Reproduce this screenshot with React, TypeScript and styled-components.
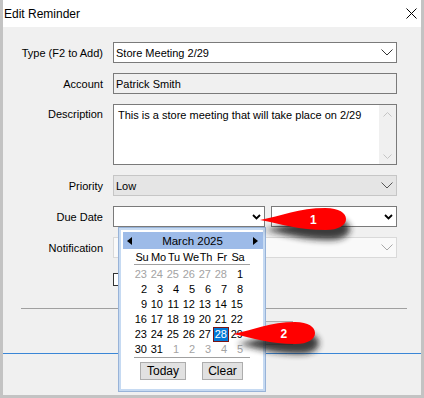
import React from 'react';
import styled, { createGlobalStyle } from 'styled-components';

const GlobalStyle = createGlobalStyle`
  html, body { margin: 0; padding: 0; }
  body {
    font-family: "Liberation Sans", Arial, sans-serif;
    font-size: 11px;
    color: #000;
  }
`;

const Frame = styled.div`
  position: relative;
  width: 424px;
  height: 398px;
  box-sizing: border-box;
  background: #c3c3c3;
  padding: 0 3px 3px 3px;
  display: flex;
  flex-direction: column;
`;

const Window = styled.div`
  flex: 1;
  display: flex;
  flex-direction: column;
  background: #f0f0f0;
`;

const TitleBar = styled.div`
  height: 27px;
  background: #fff;
  display: flex;
  align-items: center;
  justify-content: space-between;
  padding: 0 4px 0 1px;
  font-size: 12px;
`;

const Form = styled.div`
  display: grid;
  grid-template-columns: 100px 284px;
  column-gap: 10px;
  row-gap: 10px;
  padding-top: 15px;
`;

const Label = styled.div<{ $top?: boolean }>`
  text-align: right;
  align-self: ${p => (p.$top ? 'start' : 'center')};
  padding-top: ${p => (p.$top ? '4px' : '0')};
  white-space: nowrap;
`;

type Variant = 'edit' | 'readonly' | 'disabled' | 'faint';

const borders: Record<Variant, string> = {
  edit: '#7a7a7a',
  readonly: '#7a7a7a',
  disabled: '#c6c6c6',
  faint: '#d9d9d9',
};

const fills: Record<Variant, string> = {
  edit: '#ffffff',
  readonly: '#f0f0f0',
  disabled: '#e5e5e5',
  faint: '#f9f9f9',
};

const Box = styled.div<{ $variant: Variant; $width?: number }>`
  position: relative;
  height: 21px;
  width: ${p => (p.$width ? `${p.$width}px` : 'auto')};
  box-sizing: border-box;
  border: 1px solid ${p => borders[p.$variant]};
  background: ${p => fills[p.$variant]};
  display: flex;
  align-items: center;
  justify-content: space-between;
  padding: 0 3px 0 2px;
`;

const DueRow = styled.div`
  display: flex;
  gap: 6px;
`;

const TextArea = styled.div`
  height: 61px;
  box-sizing: border-box;
  border: 1px solid #7a7a7a;
  background: #fff;
  display: flex;
`;

const AreaText = styled.div`
  flex: 1;
  padding: 4px 0 0 4px;
`;

const ScrollBar = styled.div`
  width: 17px;
  background: #f0f0f0;
  display: flex;
  flex-direction: column;
  justify-content: space-between;
  align-items: center;
  padding: 7px 0 5px;
`;

const Check = styled.div`
  width: 13px;
  height: 13px;
  box-sizing: border-box;
  border: 1px solid #333;
  background: #fff;
  margin-top: 5px;
`;

const Separator = styled.div`
  height: 1px;
  background: #a0a0a0;
  margin: 22px 14px 0 18px;
`;

const ButtonRow = styled.div`
  display: flex;
  padding-left: 215px;
  margin-top: 12px;
`;

const DialogButton = styled.div`
  width: 75px;
  height: 24px;
  box-sizing: border-box;
  border: 1px solid #adadad;
  background: #e1e1e1;
`;

const Footer = styled.div`
  flex: 1;
  border-top: 1px solid #3a86d6;
  margin-top: 8px;
`;

/* calendar dropdown */

const Popup = styled.div`
  position: absolute;
  left: 4px;
  top: 20px;
  z-index: 5;
  width: 148px;
  height: 165px;
  box-sizing: border-box;
  border: 1px solid #98b3d8;
  background: #c6daf2;
  padding: 2px;
`;

const PopupInner = styled.div`
  height: 100%;
  box-sizing: border-box;
  background: #fff;
  padding: 2px 0 0 2px;
  display: flex;
  flex-direction: column;
`;

const CalHeader = styled.div`
  height: 17px;
  background: #9dbbe8;
  display: flex;
  align-items: center;
  justify-content: space-between;
  padding: 0 5px 0 4px;
  font-size: 11.5px;
`;

const Arrow = styled.div<{ $dir: 'left' | 'right' }>`
  width: 0;
  height: 0;
  border-top: 4px solid transparent;
  border-bottom: 4px solid transparent;
  ${p => (p.$dir === 'left' ? 'border-right: 5px solid #000;' : 'border-left: 5px solid #000;')}
`;

const CalGrid = styled.div`
  display: grid;
  grid-template-columns: repeat(7, 16px);
  grid-auto-rows: 15px;
  margin-left: 10px;
`;

const DayNames = styled(CalGrid)`
  grid-auto-rows: 14px;
  margin-top: 1px;
  margin-left: 11px;
  color: #1b1b2e;
  letter-spacing: -0.2px;
`;

const Cell = styled.div<{ $muted?: boolean; $selected?: boolean; $center?: boolean }>`
  box-sizing: border-box;
  text-align: ${p => (p.$center ? 'center' : 'right')};
  padding-right: ${p => (p.$center ? '0' : '1px')};
  line-height: 13px;
  color: ${p => (p.$selected ? '#fff' : p.$muted ? '#a3a3a3' : '#000')};
  background: ${p => (p.$selected ? '#0078d7' : 'transparent')};
  border: 1px solid ${p => (p.$selected ? '#7a1414' : 'transparent')};
`;

const Rule = styled.div<{ $gap: number }>`
  width: 116px;
  height: 1px;
  background: #a0a0a0;
  margin: 0 0 ${p => p.$gap}px 11px;
`;

const CalButtons = styled.div`
  display: flex;
  gap: 16px;
  margin: 4px 0 0 17px;
`;

const CalButton = styled.div<{ $width: number }>`
  width: ${p => p.$width}px;
  height: 18px;
  box-sizing: border-box;
  border: 1px solid #adadad;
  background: #e1e1e1;
  display: flex;
  align-items: center;
  justify-content: center;
  font-size: 12px;
`;

/* annotation callouts */

const CalloutSvg = styled.svg<{ $left: number; $top: number }>`
  position: absolute;
  left: ${p => p.$left}px;
  top: ${p => p.$top}px;
  z-index: 10;
  overflow: visible;
`;

function Chevron({ bold, color = '#333' }: { bold?: boolean; color?: string }) {
  return bold ? (
    <svg width="9" height="6" viewBox="0 0 9 6">
      <polyline points="1,1 4.5,4.5 8,1" fill="none" stroke="#000" strokeWidth="1.8" />
    </svg>
  ) : (
    <svg width="12" height="7" viewBox="0 0 12 7">
      <polyline points="0.5,0.5 6,6 11.5,0.5" fill="none" stroke={color} strokeWidth="1" />
    </svg>
  );
}

function SmallArrow({ up }: { up?: boolean }) {
  return (
    <svg width="9" height="5" viewBox="0 0 9 5">
      <polyline points={up ? '0.5,4.5 4.5,0.5 8.5,4.5' : '0.5,0.5 4.5,4.5 8.5,0.5'} fill="none" stroke="#c4c4c4" strokeWidth="1" />
    </svg>
  );
}

function Callout({ left, top, w, label }: { left: number; top: number; w: number; label: string }) {
  const x = (f: number) => (2 + w * f).toFixed(1);
  const d = `M2,16 C${x(0.25)},12 ${x(0.45)},4 ${x(0.76)},4 C${x(0.92)},4 ${w + 2},9 ${w + 2},15 C${w + 2},21 ${x(0.92)},26 ${x(0.76)},26 C${x(0.45)},26 ${x(0.25)},20 2,16 Z`;
  const id = `blur${label}`;
  return (
    <CalloutSvg $left={left} $top={top} width={w + 14} height={45}>
      <defs>
        <filter id={id} x="-20%" y="-40%" width="140%" height="180%">
          <feGaussianBlur stdDeviation="3" />
        </filter>
      </defs>
      <path d={d} fill="#1e1e1e" opacity="0.85" transform="translate(4,10)" filter={`url(#${id})`} />
      <path d={d} fill="#ff0000" />
      <text
        x={x(0.62)}
        y="19.5"
        fill="#fff"
        fontSize="12"
        fontWeight="bold"
        fontFamily="Liberation Sans, Arial, sans-serif"
        textAnchor="middle"
      >
        {label}
      </text>
    </CalloutSvg>
  );
}

type Day = { n: number; muted?: boolean; selected?: boolean };

const weeks: Day[][] = [
  [23, 24, 25, 26, 27, 28].map(n => ({ n, muted: true })).concat([{ n: 1 }]),
  [2, 3, 4, 5, 6, 7, 8].map(n => ({ n })),
  [9, 10, 11, 12, 13, 14, 15].map(n => ({ n })),
  [16, 17, 18, 19, 20, 21, 22].map(n => ({ n })),
  [23, 24, 25, 26, 27, 28, 29].map(n => ({ n, selected: n === 28 })),
  [{ n: 30 }, { n: 31 }, ...[1, 2, 3, 4, 5].map(n => ({ n, muted: true }))],
];

function Calendar() {
  return (
    <Popup>
      <PopupInner>
        <CalHeader>
          <Arrow $dir="left" />
          <span>March 2025</span>
          <Arrow $dir="right" />
        </CalHeader>
        <DayNames>
          {['Su', 'Mo', 'Tu', 'We', 'Th', 'Fr', 'Sa'].map(d => (
            <Cell key={d} $center>
              {d}
            </Cell>
          ))}
        </DayNames>
        <Rule $gap={2} />
        <CalGrid>
          {weeks.flat().map((d, i) => (
            <Cell key={i} $muted={d.muted} $selected={d.selected}>
              {d.n}
            </Cell>
          ))}
        </CalGrid>
        <Rule $gap={0} />
        <CalButtons>
          <CalButton $width={46}>Today</CalButton>
          <CalButton $width={41}>Clear</CalButton>
        </CalButtons>
      </PopupInner>
    </Popup>
  );
}

export default function App() {
  return (
    <Frame>
      <GlobalStyle />
      <Window>
        <TitleBar>
          <span>Edit Reminder</span>
          <svg width="11" height="11" viewBox="0 0 11 11">
            <path d="M0.5,0.5 L10.5,10.5 M10.5,0.5 L0.5,10.5" stroke="#000" strokeWidth="1" />
          </svg>
        </TitleBar>
        <Form>
          <Label>Type (F2 to Add)</Label>
          <Box $variant="edit">
            <span>Store Meeting 2/29</span>
            <Chevron />
          </Box>

          <Label>Account</Label>
          <Box $variant="readonly">
            <span>Patrick Smith</span>
          </Box>

          <Label $top>Description</Label>
          <TextArea>
            <AreaText>This is a store meeting that will take place on 2/29</AreaText>
            <ScrollBar>
              <SmallArrow up />
              <SmallArrow />
            </ScrollBar>
          </TextArea>

          <Label>Priority</Label>
          <Box $variant="disabled">
            <span>Low</span>
            <Chevron color="#555" />
          </Box>

          <Label>Due Date</Label>
          <DueRow>
            <Box $variant="edit" $width={152}>
              <span />
              <Chevron bold />
              <Calendar />
            </Box>
            <Box $variant="edit" $width={126}>
              <span />
              <Chevron bold />
            </Box>
          </DueRow>

          <Label>Notification</Label>
          <Box $variant="faint">
            <span />
            <Chevron color="#a8a8a8" />
          </Box>

          <span />
          <Check />
        </Form>
        <Separator />
        <ButtonRow>
          <DialogButton />
        </ButtonRow>
        <Footer />
      </Window>
      <Callout left={258} top={204} w={86} label="1" />
      <Callout left={231} top={318} w={82} label="2" />
    </Frame>
  );
}
